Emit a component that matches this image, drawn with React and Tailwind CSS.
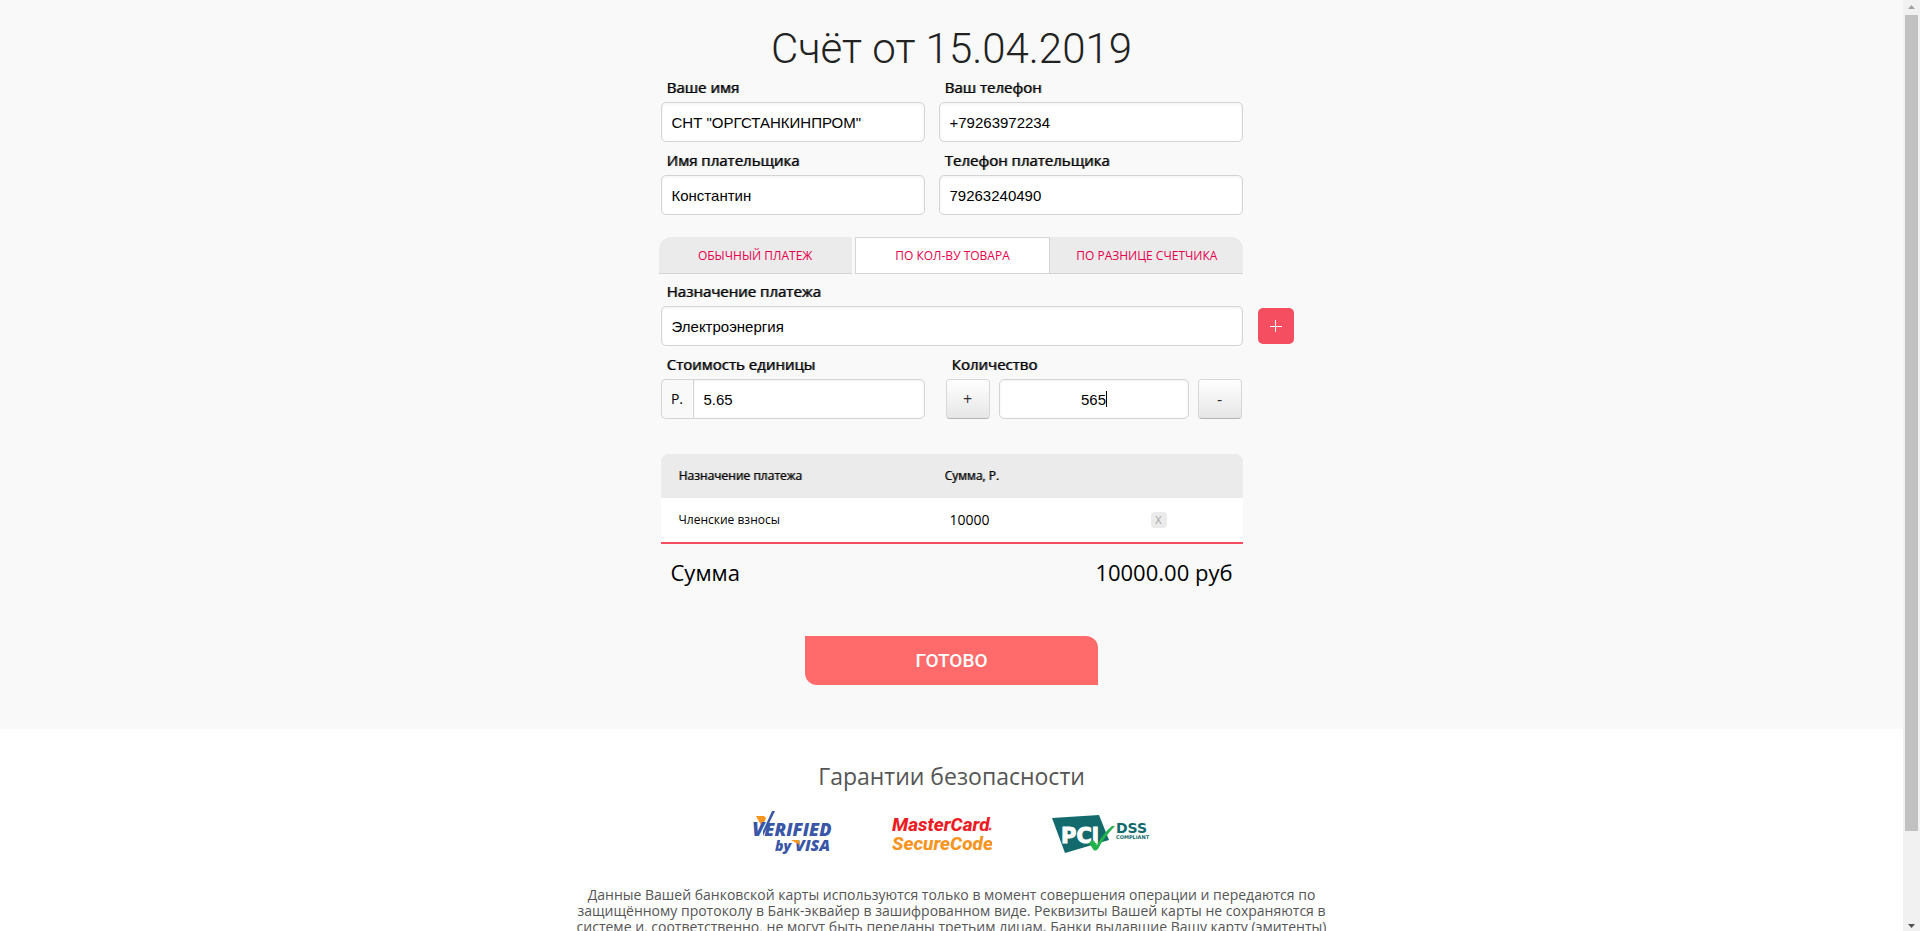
import { useState } from "react"

const tabs = ["Обычный платеж", "По кол-ву товара", "По разнице счетчика"]

const inputClass = "block w-full h-10 px-[10px] bg-white border border-[#d4d4d4] rounded-[5px] shadow-[inset_0_1px_3px_rgba(0,0,0,0.06)] font-['Liberation_Sans',sans-serif] text-[15px] text-black outline-none"
const stepClass = "w-11 h-10 shrink-0 border border-[#d8d8d8] border-b-[#b5b5b5] rounded-[4px] bg-gradient-to-b from-white to-[#e6e6e6] text-[16px] text-[#333] leading-none"

function Label({ htmlFor, children }) {
    return (
        <label htmlFor={htmlFor} className="block h-[27px] pl-[6px] text-[15px] leading-6 text-black [text-shadow:1px_0_rgba(0,0,0,0.6)]">
            {children}
        </label>
    )
}

function Field({ id, label, value, onChange, className }) {
    return (
        <div className={className}>
            <Label htmlFor={id}>{label}</Label>
            <input id={id} type="text" value={value} onChange={e => onChange(e.target.value)} className={inputClass} />
        </div>
    )
}

function VerifiedByVisa() {
    return (
        <svg className="w-20 h-[46px]" viewBox="0 0 80 46" role="img" aria-label="Verified by Visa">
            <path d="M4 7h8l2 2-4 9z" fill="#f7941d" />
            <path d="M11 22L20 2h3L11 27z" fill="#3a57a7" />
            <g fill="#3a57a7" fontFamily="'Open Sans', sans-serif" fontWeight="800" fontStyle="italic">
                <text x="0" y="27" fontSize="18"><tspan fontSize="20">V</tspan>ERIFIED</text>
                <text x="23" y="42" fontSize="14">by</text>
                <text x="43" y="42" fontSize="16">VISA</text>
            </g>
            <path d="M39 31h8l1 5z" fill="#f7941d" />
        </svg>
    )
}

function SecureCode() {
    return (
        <svg className="w-[100px] h-[46px]" viewBox="0 0 100 46" role="img" aria-label="MasterCard SecureCode">
            <g fontFamily="Roboto, sans-serif" fontWeight="800" fontStyle="italic" fontSize="19">
                <text x="0" y="22" fill="#ed1c24">MasterCard</text>
                <text x="0" y="41" fill="#f7941d">SecureCode</text>
            </g>
            <circle cx="98" cy="20" r="1" fill="none" stroke="#ed1c24" />
            <path d="M98 40h2" stroke="#f7941d" />
        </svg>
    )
}

function PciDss() {
    return (
        <svg className="w-[100px] h-[46px]" viewBox="0 0 100 46" role="img" aria-label="PCI DSS Compliant">
            <path d="M0 9l47-3 10 25-44 13z" fill="#126a6c" />
            <g fontFamily="'DejaVu Sans', sans-serif" fontWeight="700">
                <text x="9" y="34" fill="#fff" stroke="#fff" fontSize="21">PCi</text>
                <text x="64" y="24" fill="#126a6c" fontSize="14">DSS</text>
                <text x="64" y="30" fill="#126a6c" fontSize="5">COMPLIANT</text>
            </g>
            <path d="M37 34c1-2 4-3 5-2l3 4c4-8 9-14 15-19l3 0c-7 7-13 15-17 23-2 2-4 2-5 0z" fill="#22b24c" />
        </svg>
    )
}

function ScrollBar() {
    return (
        <div className="w-[17px] shrink-0 bg-[#f1f1f1] flex flex-col items-center" aria-hidden="true">
            <svg className="w-[7px] h-[15px] shrink-0" viewBox="0 0 7 15"><path d="M0 9l3.500-4L7 9z" fill="#a3a3a3" /></svg>
            <div className="w-[13px] grow-[816] basis-0 bg-[#c1c1c1]"></div>
            <div className="grow-[85] basis-0"></div>
            <svg className="w-[7px] h-[15px] shrink-0" viewBox="0 0 7 15"><path d="M0 8l3.500 4L7 8z" fill="#505050" /></svg>
        </div>
    )
}

export default function App() {
    const [name, setName] = useState('СНТ "ОРГСТАНКИНПРОМ"')
    const [phone, setPhone] = useState("+79263972234")
    const [payer, setPayer] = useState("Константин")
    const [payerPhone, setPayerPhone] = useState("79263240490")
    const [purpose, setPurpose] = useState("Электроэнергия")
    const [price, setPrice] = useState("5.65")
    const [count, setCount] = useState("565")
    const [tab, setTab] = useState(1)
    const [items, setItems] = useState([{ title: "Членские взносы", sum: 10000 }])

    const total = items.reduce((acc, item) => acc + item.sum, 0)

    return (
        <div className="h-screen flex bg-white font-['Open_Sans',sans-serif] text-black">
            <div className="flex-1 min-w-0 overflow-hidden">
                <form className="bg-[#f9f9f9] pt-6 pb-11" onSubmit={e => e.preventDefault()}>
                    <div className="max-w-[686px] mx-auto px-[52px]">
                        <h1 className="h-[51px] text-center font-['Roboto',sans-serif] font-light text-[42px] leading-[50px] text-[#222]">Счёт от 15.04.2019</h1>

                        <div className="grid grid-cols-[264fr_304fr] gap-x-[14px] gap-y-[6px]">
                            <Field id="name" label="Ваше имя" value={name} onChange={setName} />
                            <Field id="phone" label="Ваш телефон" value={phone} onChange={setPhone} />
                            <Field id="payer" label="Имя плательщика" value={payer} onChange={setPayer} />
                            <Field id="payerPhone" label="Телефон плательщика" value={payerPhone} onChange={setPayerPhone} />
                        </div>

                        {/* Payment type */}
                        <div className="flex mt-[22px] mb-[5px] -ml-[2px] -mr-px">
                            {tabs.map((title, i) => (
                                <button
                                    key={title}
                                    type="button"
                                    onClick={() => setTab(i)}
                                    className={`flex-1 h-[37px] pt-px border-b border-[#d4d4d4] text-[12px] uppercase text-[#e6004c] first:rounded-tl-xl first:mr-[3px] last:rounded-tr-xl ${tab === i ? "bg-white border-t border-x" : "bg-[#ebebeb]"}`}
                                >
                                    {title}
                                </button>
                            ))}
                        </div>

                        <div className="flex items-end -mr-[51px] gap-[15px]">
                            <Field id="purpose" label="Назначение платежа" value={purpose} onChange={setPurpose} className="flex-1" />
                            <button
                                type="button"
                                aria-label="Добавить"
                                onClick={() => setItems([...items, { title: purpose, sum: price * count }])}
                                className="size-9 mb-[2px] rounded-[5px] bg-[#f54e60] flex items-center justify-center"
                            >
                                <svg className="size-3" viewBox="0 0 12 12" stroke="#fff"><path d="M0 6.500h12M5.500 0v12" /></svg>
                            </button>
                        </div>

                        <div className="grid grid-cols-[264fr_296fr] gap-x-[21px] mt-[6px] pr-px">
                            <div>
                                <Label htmlFor="price">Стоимость единицы</Label>
                                <div className="flex">
                                    <span className="w-8 h-10 shrink-0 border border-r-0 border-[#d4d4d4] rounded-l-[5px] text-center text-[14px] leading-[38px]">Р.</span>
                                    <input id="price" type="text" value={price} onChange={e => setPrice(e.target.value)} className={`${inputClass} rounded-l-none`} />
                                </div>
                            </div>
                            <div>
                                <Label htmlFor="count">Количество</Label>
                                <div className="flex gap-[9px]">
                                    <button type="button" className={stepClass} onClick={() => setCount(String(Number(count) + 1))}>+</button>
                                    <div className="relative flex-1 min-w-0">
                                        <input id="count" type="text" value={count} onChange={e => setCount(e.target.value)} className={`${inputClass} text-center`} />
                                        <span className="absolute left-1/2 top-3 ml-3 w-px h-4 bg-black"></span>
                                    </div>
                                    <button type="button" className={stepClass} onClick={() => setCount(String(Number(count) - 1))}>-</button>
                                </div>
                            </div>
                        </div>

                        <table className="w-full mt-[35px] table-fixed border-separate border-spacing-0 text-left text-[12px]">
                            <thead>
                                <tr className="h-11 [text-shadow:1px_0_rgba(0,0,0,0.5)]">
                                    <th className="w-[278px] pl-[18px] bg-[#ebebeb] rounded-tl-lg font-normal">Назначение платежа</th>
                                    <th className="pl-[6px] bg-[#ebebeb] font-normal">Сумма, Р.</th>
                                    <th className="w-[92px] bg-[#ebebeb] rounded-tr-lg"></th>
                                </tr>
                            </thead>
                            <tbody>
                                {items.map((item, i) => (
                                    <tr key={i} className="h-[46px] bg-white">
                                        <td className="pl-[18px] border-b-2 border-[#f54e60]">{item.title}</td>
                                        <td className="pl-[11px] pb-[2px] border-b-2 border-[#f54e60] text-[14px]">{item.sum}</td>
                                        <td className="border-b-2 border-[#f54e60]">
                                            <button type="button" aria-label="Удалить" onClick={() => setItems(items.filter((_, n) => n !== i))} className="block size-4 rounded-[4px] bg-[#ebebeb] text-[11px] leading-4 text-[#a5a5a5]">X</button>
                                        </td>
                                    </tr>
                                ))}
                            </tbody>
                        </table>

                        <div className="flex justify-between h-[92px] px-[10px] pt-3 text-[22px] leading-8">
                            <span>Сумма</span>
                            <span>{total.toFixed(2)} руб</span>
                        </div>

                        <button type="submit" className="block w-[293px] h-[49px] pt-[2px] mx-auto rounded-tr-xl rounded-bl-xl bg-[#ff6b6b] font-['Roboto',sans-serif] font-medium text-[19px] text-white">
                            ГОТОВО
                        </button>
                    </div>
                </form>

                <div className="max-w-[770px] mx-auto px-[10px] pt-[31px] text-center text-[#555]">
                    <h2 className="text-[23px] leading-8">Гарантии безопасности</h2>
                    <div className="flex justify-center gap-[60px] mt-[17px] mb-8">
                        <VerifiedByVisa />
                        <SecureCode />
                        <PciDss />
                    </div>
                    <p className="text-[14px] leading-4">
                        Данные Вашей банковской карты используются только в момент совершения операции и передаются по защищённому протоколу в Банк-эквайер в зашифрованном виде. Реквизиты Вашей карты не сохраняются в системе и, соответственно, не могут быть переданы третьим лицам. Банки выдавшие Вашу карту (эмитенты)
                    </p>
                </div>
            </div>
            <ScrollBar />
        </div>
    )
}
